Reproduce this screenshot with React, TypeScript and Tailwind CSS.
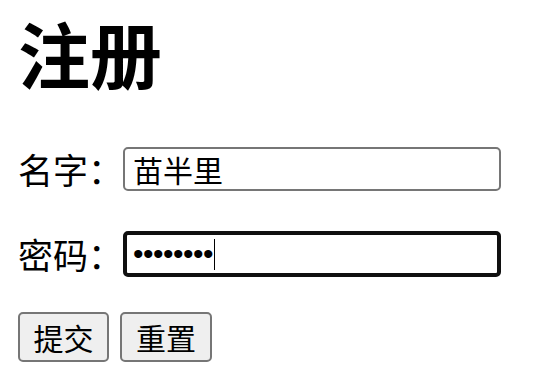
import React from "react";

export default function App() {
  const cjk = { fontFamily: '"Noto Sans CJK SC", "Noto Sans", sans-serif' } as React.CSSProperties;
  return (
    <div className="w-[558px] h-[382px] bg-white text-black pl-[18px] overflow-hidden" style={cjk}>
      <h1 className="text-[72px] font-bold leading-[72px] mt-[16px] m-0">注册</h1>
      <div className="mt-[59px] flex items-center h-[44px]">
        <span className="text-[35px] leading-[36px] w-[105px] shrink-0 whitespace-nowrap">名字：</span>
        <div className="w-[378px] shrink-0 h-[44px] border-2 border-[#767676] rounded-[5px] flex items-center pl-[8px] text-[30px] leading-[30px]">
          苗半里
        </div>
      </div>
      <div className="mt-[40px] flex items-center h-[46px]">
        <span className="text-[35px] leading-[36px] w-[105px] shrink-0 whitespace-nowrap">密码：</span>
        <div className="w-[378px] shrink-0 h-[46px] border-[4px] border-[#101010] rounded-[5px] flex items-center pl-[6px] text-[30px] leading-[30px]">
          <span className="tracking-[-0.5px]" style={{ fontFamily: '"Liberation Sans", sans-serif' }}>••••••••</span>
          <span className="inline-block w-[1px] h-[31px] bg-black ml-[1px]"></span>
        </div>
      </div>
      <div className="mt-[35px] flex gap-[11px]">
        <button className="w-[91px] h-[50px] bg-[#efefef] border-2 border-[#767676] rounded-[5px] text-[30px] leading-[30px] flex items-center justify-center">提交</button>
        <button className="w-[92px] h-[50px] bg-[#efefef] border-2 border-[#767676] rounded-[5px] text-[30px] leading-[30px] flex items-center justify-center">重置</button>
      </div>
    </div>
  );
}
